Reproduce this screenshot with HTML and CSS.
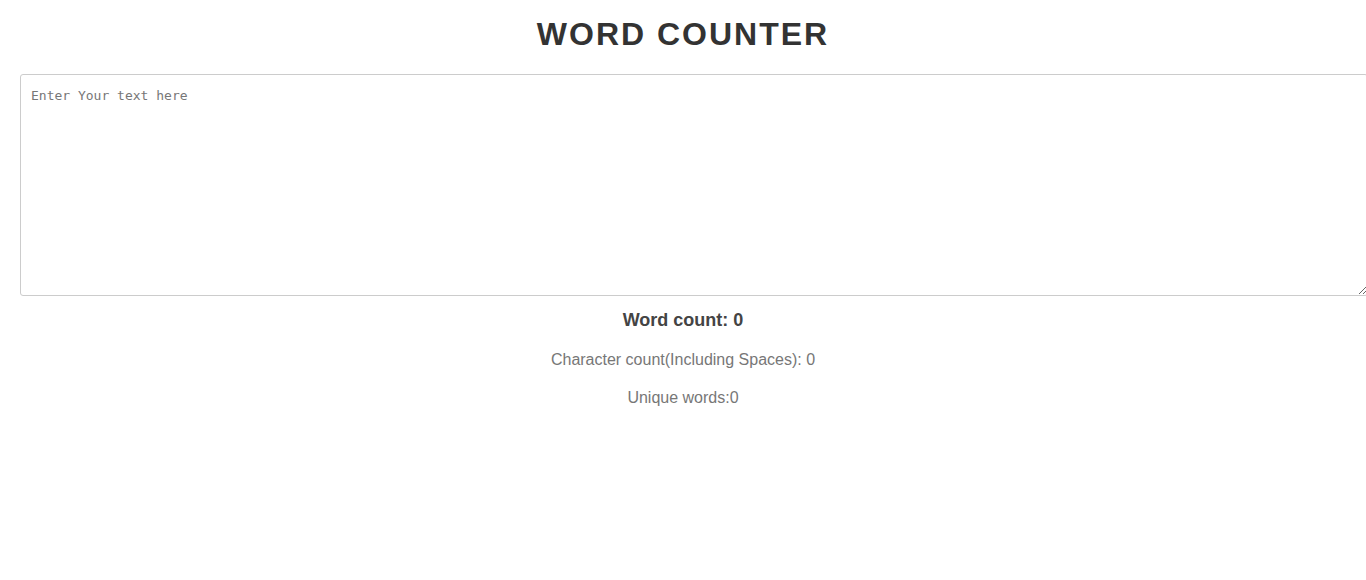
FILE: index.html
```html
<!DOCTYPE html>
<html lang="en">
<head>
<meta charset="utf-8">
<title>Word Counter</title>
<link rel="stylesheet" href="styles.css">
</head>
<body>
<main class="app">
  <h1 class="title">WORD COUNTER</h1>
  <textarea class="input" placeholder="Enter Your text here"></textarea>
  <div class="stats">
    <p class="stat stat-main">Word count: 0</p>
    <p class="stat">Character count(Including Spaces): 0</p>
    <p class="stat">Unique words:0</p>
  </div>
</main>
</body>
</html>
```

FILE: styles.css
```css
html, body {
  margin: 0;
  padding: 0;
  background: #fff;
}
body {
  font-family: "Liberation Sans", Arial, sans-serif;
}
.app {
  padding: 0 20px;
}
.title {
  margin: 16px 0 21px;
  text-align: center;
  font-size: 32px;
  line-height: 37px;
  font-weight: bold;
  letter-spacing: 2px;
  color: #333;
}
.input {
  display: block;
  width: 100%;
  box-sizing: content-box;
  height: 197px;
  padding: 13px 10px 10px;
  border: 1px solid #ccc;
  border-radius: 3px;
  font-family: "DejaVu Sans Mono", "Liberation Mono", monospace;
  font-size: 13px;
  color: #333;
  margin: 0;
}
.input::placeholder {
  color: #777;
}
.stats {
  text-align: center;
  padding-top: 14px;
}
.stat {
  margin: 0 0 20px;
  font-size: 16px;
  line-height: 18px;
  color: #777;
}
.stat-main {
  font-size: 18px;
  line-height: 21px;
  font-weight: bold;
  color: #444;
  margin-bottom: 20px;
}
```
